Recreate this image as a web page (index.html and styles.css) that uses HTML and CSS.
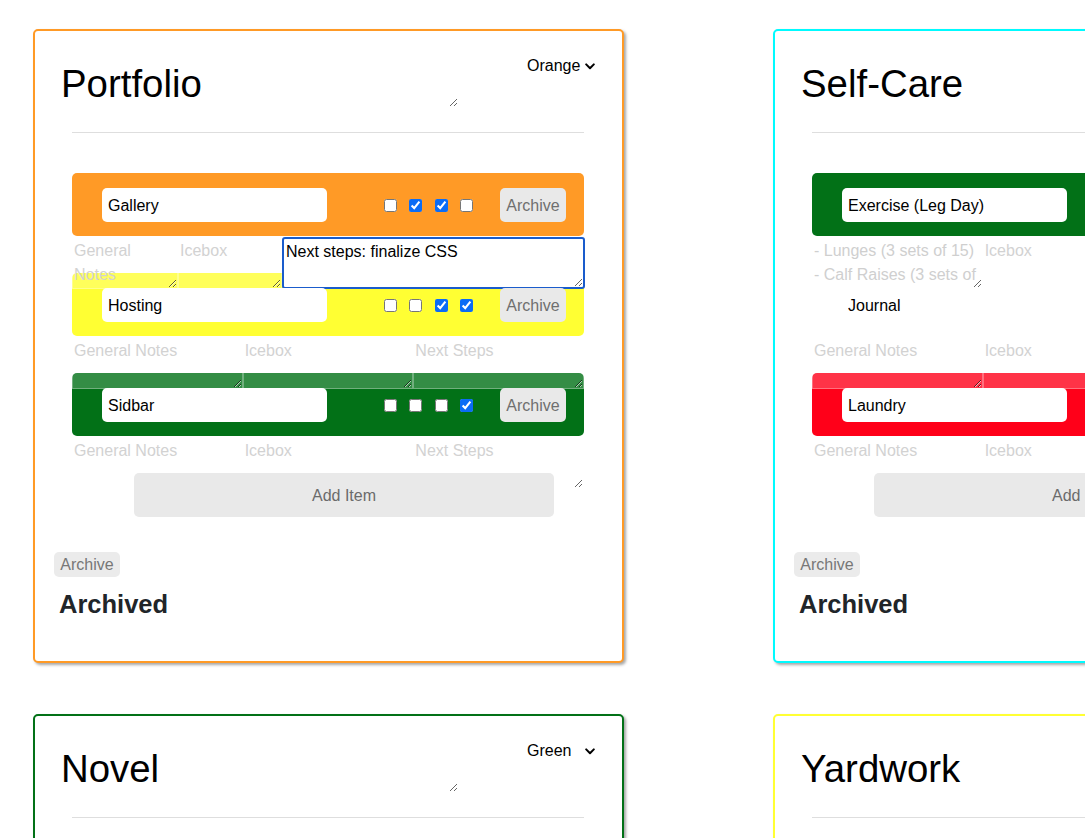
FILE: index.html
```html
<!DOCTYPE html>
<html lang="en">
<head>
<meta charset="utf-8">
<title>Projects</title>
<link rel="stylesheet" href="styles.css">
</head>
<body>
<div class="board">

  <section class="card card-orange">
    <div class="card-head">
      <textarea class="title">Portfolio</textarea>
      <div class="color-pick"><span>Orange</span><svg class="chev" width="10" height="7" viewBox="0 0 10 7"><path d="M1.2 1.4 5 5.2 8.8 1.4" fill="none" stroke="#000" stroke-width="2" stroke-linecap="round" stroke-linejoin="round"/></svg></div>
    </div>
    <div class="divider"></div>
    <div class="items">
      <div class="item">
        <div class="row bg-orange">
          <input class="item-name" type="text" value="Gallery">
          <div class="checks"><input type="checkbox"><input type="checkbox" checked><input type="checkbox" checked><input type="checkbox"></div>
          <button class="row-archive">Archive</button>
        </div>
        <div class="notes">
          <textarea class="note note-a" placeholder="General Notes"></textarea>
          <textarea class="note note-b" placeholder="Icebox"></textarea>
          <textarea class="note note-c note-active" placeholder="Next Steps">Next steps: finalize CSS</textarea>
        </div>
      </div>
      <div class="item">
        <div class="row bg-yellow">
          <input class="item-name" type="text" value="Hosting">
          <div class="checks"><input type="checkbox"><input type="checkbox"><input type="checkbox" checked><input type="checkbox" checked></div>
          <button class="row-archive">Archive</button>
        </div>
        <div class="notes">
          <textarea class="note" placeholder="General Notes"></textarea>
          <textarea class="note" placeholder="Icebox"></textarea>
          <textarea class="note" placeholder="Next Steps"></textarea>
        </div>
      </div>
      <div class="item">
        <div class="row bg-green">
          <input class="item-name" type="text" value="Sidbar">
          <div class="checks"><input type="checkbox"><input type="checkbox"><input type="checkbox"><input type="checkbox" checked></div>
          <button class="row-archive">Archive</button>
        </div>
        <div class="notes">
          <textarea class="note" placeholder="General Notes"></textarea>
          <textarea class="note" placeholder="Icebox"></textarea>
          <textarea class="note" placeholder="Next Steps"></textarea>
        </div>
      </div>
      <div class="add-line"><button class="add-item">Add Item</button></div>
    </div>
    <button class="archive-btn">Archive</button>
    <h2 class="archived">Archived</h2>
  </section>

  <section class="card card-cyan">
    <div class="card-head">
      <textarea class="title">Self-Care</textarea>
      <div class="color-pick"><span>Cyan</span><svg class="chev" width="10" height="7" viewBox="0 0 10 7"><path d="M1.2 1.4 5 5.2 8.8 1.4" fill="none" stroke="#000" stroke-width="2" stroke-linecap="round" stroke-linejoin="round"/></svg></div>
    </div>
    <div class="divider"></div>
    <div class="items">
      <div class="item">
        <div class="row bg-green">
          <input class="item-name" type="text" value="Exercise (Leg Day)">
          <div class="checks"><input type="checkbox"><input type="checkbox" checked><input type="checkbox"><input type="checkbox"></div>
          <button class="row-archive">Archive</button>
        </div>
        <div class="notes">
          <textarea class="note" placeholder="General Notes">- Lunges (3 sets of 15)
- Calf Raises (3 sets of 15)
- Squats (3 sets of 10)</textarea>
          <textarea class="note" placeholder="Icebox"></textarea>
          <textarea class="note" placeholder="Next Steps"></textarea>
        </div>
      </div>
      <div class="item">
        <div class="row">
          <input class="item-name" type="text" value="Journal">
          <div class="checks"><input type="checkbox"><input type="checkbox"><input type="checkbox"><input type="checkbox"></div>
          <button class="row-archive">Archive</button>
        </div>
        <div class="notes">
          <textarea class="note" placeholder="General Notes"></textarea>
          <textarea class="note" placeholder="Icebox"></textarea>
          <textarea class="note" placeholder="Next Steps"></textarea>
        </div>
      </div>
      <div class="item">
        <div class="row bg-red">
          <input class="item-name" type="text" value="Laundry">
          <div class="checks"><input type="checkbox"><input type="checkbox"><input type="checkbox"><input type="checkbox"></div>
          <button class="row-archive">Archive</button>
        </div>
        <div class="notes">
          <textarea class="note" placeholder="General Notes"></textarea>
          <textarea class="note" placeholder="Icebox"></textarea>
          <textarea class="note" placeholder="Next Steps"></textarea>
        </div>
      </div>
      <div class="add-line"><button class="add-item">Add Item</button></div>
    </div>
    <button class="archive-btn">Archive</button>
    <h2 class="archived">Archived</h2>
  </section>

  <section class="card card-green">
    <div class="card-head">
      <textarea class="title">Novel</textarea>
      <div class="color-pick"><span>Green</span><svg class="chev" width="10" height="7" viewBox="0 0 10 7"><path d="M1.2 1.4 5 5.2 8.8 1.4" fill="none" stroke="#000" stroke-width="2" stroke-linecap="round" stroke-linejoin="round"/></svg></div>
    </div>
    <div class="divider"></div>
    <div class="items">
      <div class="add-line"><button class="add-item">Add Item</button></div>
    </div>
    <button class="archive-btn">Archive</button>
    <h2 class="archived">Archived</h2>
  </section>

  <section class="card card-yellow">
    <div class="card-head">
      <textarea class="title">Yardwork</textarea>
      <div class="color-pick"><span>Yellow</span><svg class="chev" width="10" height="7" viewBox="0 0 10 7"><path d="M1.2 1.4 5 5.2 8.8 1.4" fill="none" stroke="#000" stroke-width="2" stroke-linecap="round" stroke-linejoin="round"/></svg></div>
    </div>
    <div class="divider"></div>
    <div class="items">
      <div class="add-line"><button class="add-item">Add Item</button></div>
    </div>
    <button class="archive-btn">Archive</button>
    <h2 class="archived">Archived</h2>
  </section>

</div>
</body>
</html>
```

FILE: styles.css
```css
* {
  box-sizing: border-box;
}

html,
body {
  margin: 0;
  overflow: hidden;
  background: #fff;
}

body {
  font-family: "Liberation Sans", Arial, sans-serif;
  font-size: 16px;
  color: #000;
}

.board {
  display: grid;
  grid-template-columns: 591px 591px;
  column-gap: 149px;
  row-gap: 51px;
  padding: 29px 0 0 33px;
  width: max-content;
}

.card {
  height: 634px;
  border: 2px solid #ccc;
  border-radius: 5px;
  box-shadow: 2px 2px 3px rgba(0, 0, 0, 0.35);
  padding: 25px 27px 0 24px;
  background: #fff;
}

.card-orange { border-color: #ff9a26; }
.card-cyan { border-color: #00fbff; }
.card-green { border-color: #027117; }
.card-yellow { border-color: #ffff33; }

.card-head {
  display: flex;
  justify-content: space-between;
  align-items: flex-start;
}

.title {
  width: 399px;
  height: 48px;
  margin: 3px 0 0;
  padding: 3px 2px 1px;
  border: 0;
  outline: none;
  background: transparent;
  font-family: "Liberation Sans", Arial, sans-serif;
  font-size: 38.4px;
  line-height: 44px;
  color: #000;
  resize: both;
  overflow: hidden;
}

.color-pick {
  display: flex;
  align-items: center;
  justify-content: space-between;
  width: 68px;
  margin-top: 1px;
  font-size: 16px;
  line-height: 18px;
  color: #000;
}

.chev {
  display: block;
  margin-top: 0;
}

.divider {
  height: 1px;
  background: #dedede;
  margin: 25px 11px 0 13px;
}

.items {
  margin: 40px 11px 0 13px;
}

.row {
  display: flex;
  align-items: center;
  padding: 15px 18px 14px 30px;
  border-radius: 5px;
}

.bg-orange { background: #ff9a26; }
.bg-yellow { background: #ffff33; }
.bg-green { background: #027117; }
.bg-red { background: #ff0019; }

.item-name {
  width: 225px;
  height: 34px;
  margin: 0;
  padding: 2px 6px 0;
  border: 0;
  border-radius: 5px;
  background: #fff;
  font-family: "Liberation Sans", Arial, sans-serif;
  font-size: 16px;
  color: #000;
  outline: none;
}

.checks {
  display: flex;
  gap: 12.5px;
  margin-left: auto;
}

.checks input {
  width: 13px;
  height: 13px;
  margin: 0;
  accent-color: #0b6cf5;
}

.row-archive {
  width: 66px;
  height: 34px;
  margin-left: 27px;
  padding: 2px 0 0;
  border: 0;
  border-radius: 5px;
  background: #e9e9e9;
  color: #6f6f6f;
  font-family: "Liberation Sans", Arial, sans-serif;
  font-size: 16px;
}

.notes {
  display: flex;
  align-items: flex-start;
  height: 36px;
  margin-top: 1px;
}

.note {
  flex: 1 1 0;
  min-width: 0;
  height: 52px;
  margin: 0;
  padding: 1px 1px 0;
  border: 1px solid rgba(255, 255, 255, 0.3);
  border-radius: 0;
  background: rgba(255, 255, 255, 0.2);
  font-family: "Liberation Sans", Arial, sans-serif;
  font-size: 16px;
  line-height: 24px;
  color: #cfcfcf;
  outline: none;
  resize: both;
  overflow: hidden;
}

.note::placeholder {
  color: #d2d2d2;
  opacity: 1;
}

.note-a { flex: 0 0 106px; }
.note-b { flex: 0 0 104px; }
.note-c { flex: 0 0 303px; }

.note-active {
  border: 2px solid #1a5ccc;
  border-radius: 3px;
  background: #fff;
  color: #000;
  padding: 1px 2px 0;
}

.add-line {
  line-height: 0;
}

.add-item {
  display: inline-block;
  vertical-align: top;
  width: 420px;
  height: 44px;
  margin: 0 0 0 62px;
  padding: 2px 0 0;
  border: 0;
  border-radius: 5px;
  background: #e9e9e9;
  color: #6b6b6b;
  font-family: "Liberation Sans", Arial, sans-serif;
  font-size: 16px;
  line-height: normal;
}

.archive-btn {
  display: block;
  width: 66px;
  height: 25px;
  margin: 35px 0 0 -5px;
  padding: 1px 0 0;
  border: 0;
  border-radius: 5px;
  background: #ebebeb;
  color: #777;
  font-family: "Liberation Sans", Arial, sans-serif;
  font-size: 16px;
}

.archived {
  margin: 12px 0 0;
  font-family: "Liberation Sans", Arial, sans-serif;
  font-size: 25.5px;
  line-height: 30px;
  font-weight: bold;
  color: #212529;
}
```
